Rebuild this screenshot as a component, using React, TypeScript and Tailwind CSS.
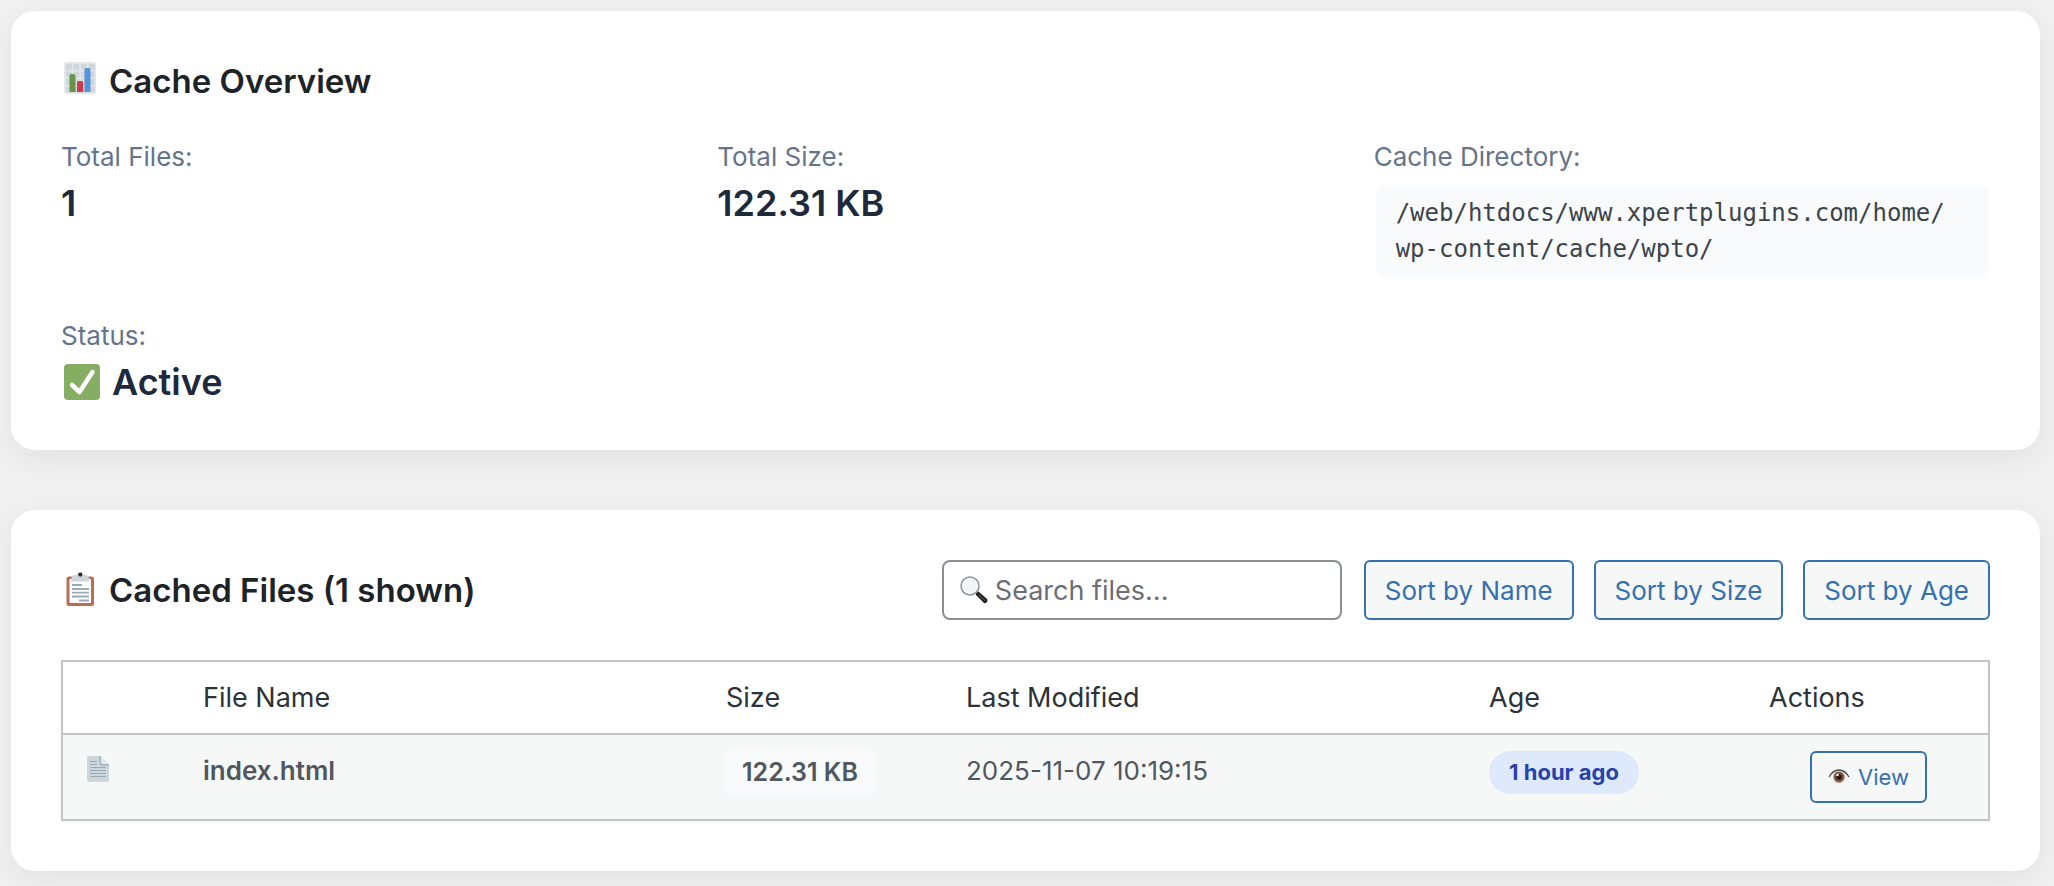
import type { ReactNode } from "react";

function ChartIcon() {
  return (
    <svg viewBox="0 0 32 32" className="mb-1.5 h-8 w-8 shrink-0" aria-hidden="true">
      <rect width="32" height="32" rx="3" fill="#e1e7eb" />
      {[2, 9.5, 17, 24.5].map((x) =>
        [2, 9.5, 17, 24.5].map((y) => (
          <rect key={`${x}-${y}`} x={x} y={y} width="6" height="6" rx="1" fill="#cfd6dc" />
        ))
      )}
      <path d="M5.500 30V14a2 2 0 0 1 2-2h2a2 2 0 0 1 2 2v16z" fill="#67934a" />
      <path d="M13 30V21a2 2 0 0 1 2-2h2.200a2 2 0 0 1 2 2v9z" fill="#cd3b48" />
      <path d="M20.500 30V8a2 2 0 0 1 2-2h2a2 2 0 0 1 2 2v22z" fill="#5594d8" />
    </svg>
  );
}

function ClipboardIcon() {
  return (
    <svg viewBox="0 0 32 36" className="h-9 w-8 shrink-0" aria-hidden="true">
      <rect x="2.500" y="4.500" width="27.500" height="29.500" rx="2.500" fill="#bd6b54" />
      <rect x="5.500" y="7" width="21.500" height="24" rx="1" fill="#fff" />
      <path d="M7.500 9.500V6q0-3 4-3h1.500q1-3 3.300-3T19.500 3H21q4 0 4 3v3.500z" fill="#cbd5db" />
      <circle cx="16.300" cy="2.600" r="2.100" fill="#292f33" />
      <path d="M8 13h10M8 17h17M8 20.700h17M8 24.500h17M15 28.500h10" stroke="#9aaab4" strokeWidth="1.800" />
    </svg>
  );
}

function CheckIcon() {
  return (
    <svg viewBox="0 0 36 36" className="h-9 w-9 shrink-0" aria-hidden="true">
      <rect width="36" height="36" rx="4" fill="#86ae62" />
      <path d="M8 21l7.500 7L28.500 8" fill="none" stroke="#fff" strokeWidth="4.500" strokeLinecap="round" strokeLinejoin="round" />
    </svg>
  );
}

function PageIcon() {
  return (
    <svg viewBox="0 0 22 26" className="h-[26px] w-[22px]" role="img" aria-label="File">
      <path d="M2.500 0H13l9 9v14.500a2.500 2.500 0 0 1-2.500 2.500h-17A2.500 2.500 0 0 1 0 23.500v-21A2.500 2.500 0 0 1 2.500 0z" fill="#ccd6dd" />
      <path d="M14 0l8 8h-6.500a1.500 1.500 0 0 1-1.500-1.500z" fill="#e1e8ed" />
      <path d="M13.200 0v7.500q0 1.300 1.300 1.300H22" fill="none" stroke="#99aab5" strokeWidth="1.200" />
      <path d="M3 5.500h7M3 8.500h7M3 11.500h16M3 14.500h16M3 17.500h16M3 20.500h16" stroke="#99aab5" strokeWidth="1.200" />
    </svg>
  );
}

function SearchIcon() {
  return (
    <svg viewBox="0 0 28 28" className="h-7 w-7" aria-hidden="true">
      <path d="M16 17l2.500-1.500 8.500 7.500q1 1.500 0 3t-3 1L16 19z" fill="#1b1c1e" />
      <path d="M18.500 18.500l7 6.500" stroke="#6d7074" strokeWidth="1" />
      <circle cx="10" cy="10" r="9" fill="#f3f5f7" stroke="#8b949c" strokeWidth="1.500" />
    </svg>
  );
}

function EyeIcon() {
  return (
    <svg viewBox="0 0 22 16" className="h-4 w-[22px]" aria-hidden="true">
      <path d="M1 8Q5 1 11 1t10 7q-4 7-10 7T1 8z" fill="#eceef0" />
      <path d="M1 8Q5 1 11 1t10 7" fill="none" stroke="#45494d" strokeWidth="1.300" />
      <circle cx="11" cy="8" r="5.500" fill="#8a5636" />
      <circle cx="11" cy="8" r="2.800" fill="#17181a" />
      <circle cx="9.500" cy="6" r="1.300" fill="#fff" />
    </svg>
  );
}

function Card({ children }: { children: ReactNode }) {
  return (
    <section className="rounded-3xl bg-white p-[50px] shadow-[0_8px_30px_rgba(0,0,0,0.06)]">{children}</section>
  );
}

function CardTitle({ icon, children }: { icon: ReactNode; children: ReactNode }) {
  return (
    <h2 className="flex items-center gap-[13px] pl-[3px] text-[33px] leading-10 font-semibold text-[#1d2327]">
      {icon}
      {children}
    </h2>
  );
}

function Stat({ label, children }: { label: string; children: ReactNode }) {
  return (
    <div className="flex flex-col gap-2">
      <dt className="text-[26px] leading-10 text-[#64748b]">{label}</dt>
      <dd className="text-[36px] leading-9 font-semibold text-[#1e293b]">{children}</dd>
    </div>
  );
}

const buttonColors = "border-2 border-[#3571ae] bg-[#f6f7f7] text-[#3571ae]";

export default function App() {
  return (
    <main className="flex min-h-screen flex-col gap-[60px] bg-[#f0f0f0] pt-[11px] pr-3.5 pb-[15px] pl-[11px] font-['Inter',sans-serif]">
      <Card>
        <CardTitle icon={<ChartIcon />}>Cache Overview</CardTitle>
        <dl className="mt-9 grid grid-cols-3 gap-x-10 gap-y-[39px]">
          <Stat label="Total Files:">1</Stat>
          <Stat label="Total Size:">122.31 KB</Stat>
          <Stat label="Cache Directory:">
            <code className="mx-0.5 block rounded-lg bg-[#f8fafc] px-5 py-2.5 font-['DejaVu_Sans_Mono',monospace] text-2xl leading-9 font-normal text-[#3c434a]">
              /web/htdocs/www.xpertplugins.com/home/
              <wbr />
              wp-content/cache/wpto/
            </code>
          </Stat>
          <Stat label="Status:">
            <span className="flex items-center gap-3 pl-[3px]">
              <CheckIcon />
              Active
            </span>
          </Stat>
        </dl>
      </Card>

      <Card>
        <div className="flex items-center justify-between">
          <CardTitle icon={<ClipboardIcon />}>Cached Files (1 shown)</CardTitle>
          <div className="flex gap-5">
            <label className="relative mr-0.5 flex items-center">
              <span className="absolute left-[18px]">
                <SearchIcon />
              </span>
              <input
                type="search"
                aria-label="Search files"
                placeholder="Search files..."
                className="h-[60px] w-[400px] rounded-lg border-2 border-[#8c8f94] bg-white pr-4 pl-[51px] text-[27px] text-[#2c3338] placeholder:text-[#6b6e74]"
              />
            </label>
            {["Sort by Name", "Sort by Size", "Sort by Age"].map((label) => (
              <button key={label} type="button" className={`h-[60px] rounded-md px-[19px] text-[26px] ${buttonColors}`}>
                {label}
              </button>
            ))}
          </div>
        </div>

        <table className="mt-10 w-full table-fixed border-collapse border-2 border-[#c3c4c7] text-left shadow-[0_2px_2px_rgba(0,0,0,0.04)]">
          <colgroup>
            <col className="w-[121px]" />
            <col />
            <col className="w-60" />
            <col />
            <col className="w-[280px]" />
            <col className="w-60" />
          </colgroup>
          <thead>
            <tr className="border-b-2 border-[#c3c4c7] text-[27px] leading-[39px] text-[#2c3338]">
              <td className="px-5 py-4" />
              {["File Name", "Size", "Last Modified", "Age", "Actions"].map((name) => (
                <th key={name} scope="col" className="px-5 py-4 font-normal">
                  {name}
                </th>
              ))}
            </tr>
          </thead>
          <tbody>
            <tr className="bg-[#f6f7f7] align-top text-[26px] leading-10 text-[#50575e]">
              <td className="px-6 py-[21px]">
                <PageIcon />
              </td>
              <td className="px-5 py-4 font-semibold">index.html</td>
              <td className="px-5 py-3.5">
                <span className="inline-block rounded-lg bg-[#f8fafc] px-4 py-1 text-[25px] leading-[38px] font-semibold">
                  122.31 KB
                </span>
              </td>
              <td className="px-5 py-4">2025-11-07 10:19:15</td>
              <td className="px-5 py-4">
                <span className="inline-block rounded-full bg-[#dee9fc] px-5 text-[22px] leading-[43px] font-bold text-[#2842aa]">
                  1 hour ago
                </span>
              </td>
              <td className="px-5 py-4">
                <button
                  type="button"
                  className={`mx-auto flex h-[52px] items-center gap-2 rounded-md px-4 text-[22px] ${buttonColors}`}
                >
                  <EyeIcon />
                  View
                </button>
              </td>
            </tr>
          </tbody>
        </table>
      </Card>
    </main>
  );
}
